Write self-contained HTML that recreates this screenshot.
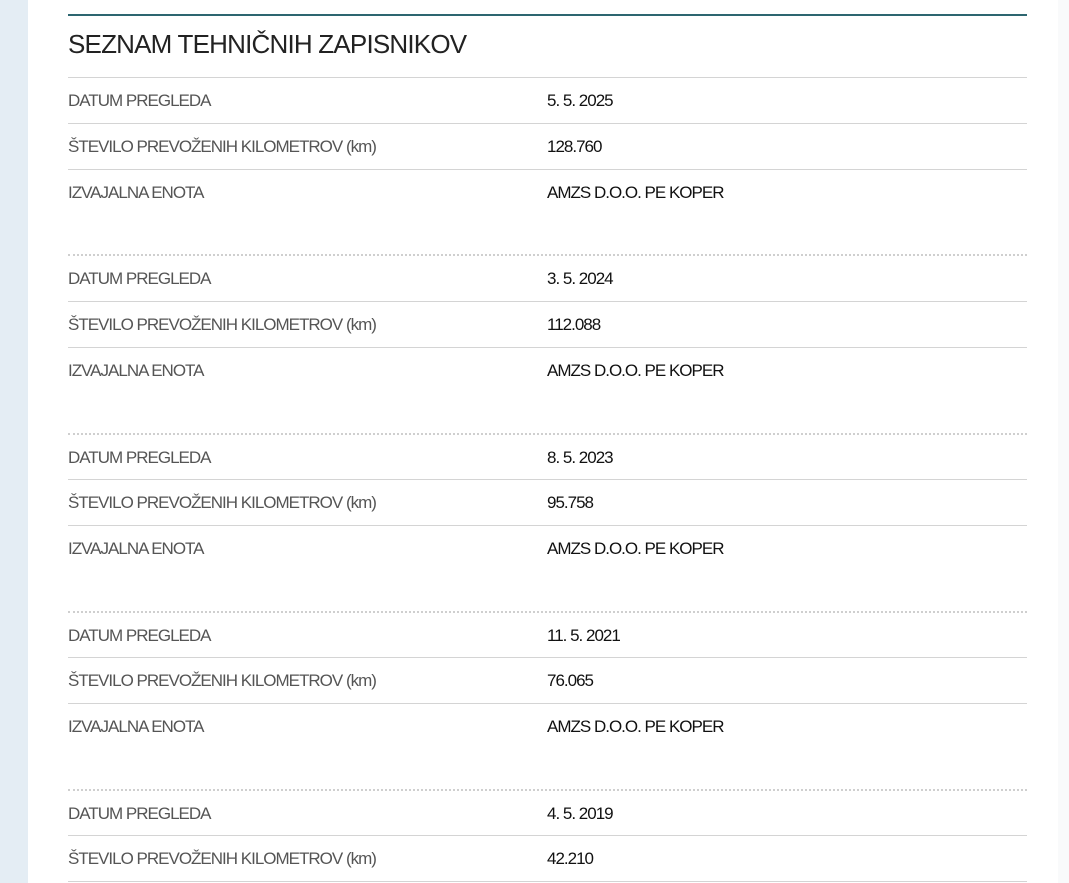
<!DOCTYPE html>
<html><head><meta charset="utf-8"><style>
body{margin:0;width:1069px;height:883px;overflow:hidden;background:#fff;font-family:"Liberation Sans",sans-serif;position:relative}
.side{position:absolute;left:0;top:0;width:28px;height:883px;background:#e4edf4}
.rside{position:absolute;left:1058px;top:0;width:11px;height:883px;background:#f9fafb}
.top{position:absolute;left:68px;top:14px;width:959px;height:2px;background:#2d6670}
h1{position:absolute;left:68px;top:29px;margin:0;font-weight:normal;font-size:26px;color:#222;letter-spacing:-0.8px}
.l{position:absolute;left:68px;width:959px;height:0;border-top:1px solid #d4d4d4}
.d{position:absolute;left:68px;width:959px;height:0;border-top:2px dotted #cfcfcf}
.k{position:absolute;left:68px;font-size:17px;color:#555;letter-spacing:-1px;margin-top:-1px}
.v{position:absolute;left:547px;font-size:17px;color:#111;letter-spacing:-1px;margin-top:-1px}
</style></head><body>
<div class="side"></div><div class="rside"></div>
<div class="top"></div>
<h1>SEZNAM TEHNIČNIH ZAPISNIKOV</h1>

<div class="l" style="top:77px"></div>
<div class="k" style="top:92px">DATUM PREGLEDA</div><div class="v" style="top:92px">5. 5. 2025</div>
<div class="l" style="top:123px"></div>
<div class="k" style="top:138px">ŠTEVILO PREVOŽENIH KILOMETROV (km)</div><div class="v" style="top:138px">128.760</div>
<div class="l" style="top:169px"></div>
<div class="k" style="top:184px">IZVAJALNA ENOTA</div><div class="v" style="top:184px">AMZS D.O.O. PE KOPER</div>

<div class="d" style="top:254px"></div>
<div class="k" style="top:270px">DATUM PREGLEDA</div><div class="v" style="top:270px">3. 5. 2024</div>
<div class="l" style="top:301px"></div>
<div class="k" style="top:316px">ŠTEVILO PREVOŽENIH KILOMETROV (km)</div><div class="v" style="top:316px">112.088</div>
<div class="l" style="top:347px"></div>
<div class="k" style="top:362px">IZVAJALNA ENOTA</div><div class="v" style="top:362px">AMZS D.O.O. PE KOPER</div>

<div class="d" style="top:433px"></div>
<div class="k" style="top:449px">DATUM PREGLEDA</div><div class="v" style="top:449px">8. 5. 2023</div>
<div class="l" style="top:479px"></div>
<div class="k" style="top:494px">ŠTEVILO PREVOŽENIH KILOMETROV (km)</div><div class="v" style="top:494px">95.758</div>
<div class="l" style="top:525px"></div>
<div class="k" style="top:540px">IZVAJALNA ENOTA</div><div class="v" style="top:540px">AMZS D.O.O. PE KOPER</div>

<div class="d" style="top:611px"></div>
<div class="k" style="top:627px">DATUM PREGLEDA</div><div class="v" style="top:627px">11. 5. 2021</div>
<div class="l" style="top:657px"></div>
<div class="k" style="top:672px">ŠTEVILO PREVOŽENIH KILOMETROV (km)</div><div class="v" style="top:672px">76.065</div>
<div class="l" style="top:703px"></div>
<div class="k" style="top:718px">IZVAJALNA ENOTA</div><div class="v" style="top:718px">AMZS D.O.O. PE KOPER</div>

<div class="d" style="top:789px"></div>
<div class="k" style="top:805px">DATUM PREGLEDA</div><div class="v" style="top:805px">4. 5. 2019</div>
<div class="l" style="top:835px"></div>
<div class="k" style="top:850px">ŠTEVILO PREVOŽENIH KILOMETROV (km)</div><div class="v" style="top:850px">42.210</div>
<div class="l" style="top:881px"></div>
</body></html>
